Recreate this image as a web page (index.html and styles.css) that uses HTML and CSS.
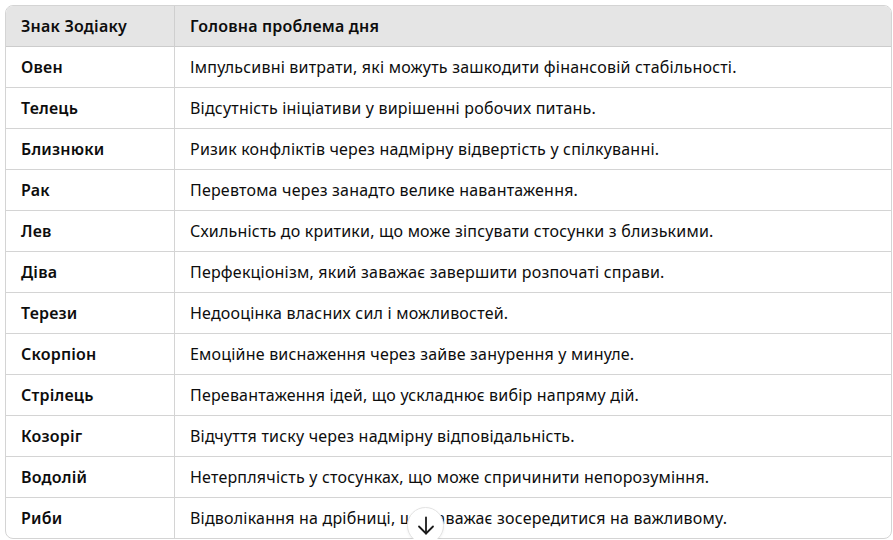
FILE: index.html
```html
<!DOCTYPE html>
<html lang="uk">
<head>
<meta charset="utf-8">
<link rel="stylesheet" href="styles.css">
</head>
<body>
<div class="wrap">
<table class="zt">
<thead>
<tr><th class="c1">Знак Зодіаку</th><th>Головна проблема дня</th></tr>
</thead>
<tbody>
<tr><td class="c1">Овен</td><td>Імпульсивні витрати, які можуть зашкодити фінансовій стабільності.</td></tr>
<tr><td class="c1">Телець</td><td>Відсутність ініціативи у вирішенні робочих питань.</td></tr>
<tr><td class="c1">Близнюки</td><td>Ризик конфліктів через надмірну відвертість у спілкуванні.</td></tr>
<tr><td class="c1">Рак</td><td>Перевтома через занадто велике навантаження.</td></tr>
<tr><td class="c1">Лев</td><td>Схильність до критики, що може зіпсувати стосунки з близькими.</td></tr>
<tr><td class="c1">Діва</td><td>Перфекціонізм, який заважає завершити розпочаті справи.</td></tr>
<tr><td class="c1">Терези</td><td>Недооцінка власних сил і можливостей.</td></tr>
<tr><td class="c1">Скорпіон</td><td>Емоційне виснаження через зайве занурення у минуле.</td></tr>
<tr><td class="c1">Стрілець</td><td>Перевантаження ідей, що ускладнює вибір напряму дій.</td></tr>
<tr><td class="c1">Козоріг</td><td>Відчуття тиску через надмірну відповідальність.</td></tr>
<tr><td class="c1">Водолій</td><td>Нетерплячість у стосунках, що може спричинити непорозуміння.</td></tr>
<tr><td class="c1">Риби</td><td>Відволікання на дрібниці, що заважає зосередитися на важливому.</td></tr>
</tbody>
</table>
<button class="scroll" aria-label="Прокрутити вниз">
<svg width="22" height="22" viewBox="0 0 22 22" fill="none" stroke="#1a1a1a" stroke-width="1.8" stroke-linecap="round" stroke-linejoin="round"><path d="M11 2.5v16"/><path d="M4 11.5l7 7 7-7"/></svg>
</button>
</div>
</body>
</html>
```

FILE: styles.css
```css
html, body {
  margin: 0;
  padding: 0;
  background: #fff;
  overflow: hidden;
}
body {
  padding: 5px 0 0 5px;
  font-family: "Segoe UI", "Noto Sans", "Open Sans", sans-serif;
  font-size: 16px;
  letter-spacing: 0.2px;
  color: #0d0d0d;
}
.wrap {
  position: relative;
  width: 887px;
}
.zt {
  width: 887px;
  border-collapse: separate;
  border-spacing: 0;
  border: 1px solid #d4d4d4;
  border-radius: 8px;
  overflow: hidden;
}
.zt th, .zt td {
  height: 40px;
  padding: 0 15px;
  text-align: left;
  border-bottom: 1px solid #d4d4d4;
  vertical-align: middle;
  line-height: 20px;
  white-space: nowrap;
}
.zt th {
  background: #e5e5e5;
  font-weight: 600;
  border-bottom: 1px solid #cccccc;
}
.zt tbody tr:last-child td {
  border-bottom: none;
}
.zt .c1 {
  width: 138px;
  border-right: 1px solid #d4d4d4;
  font-weight: 600;
}
.zt th.c1 { border-right-color: #cfcfcf; }
.scroll {
  position: absolute;
  left: 402px;
  top: 502px;
  width: 37px;
  height: 37px;
  border-radius: 50%;
  border: 1px solid #e3e3e3;
  background: #fff;
  display: flex;
  align-items: center;
  justify-content: center;
  padding: 0;
  box-shadow: 0 1px 3px rgba(0,0,0,0.06);
}
```
